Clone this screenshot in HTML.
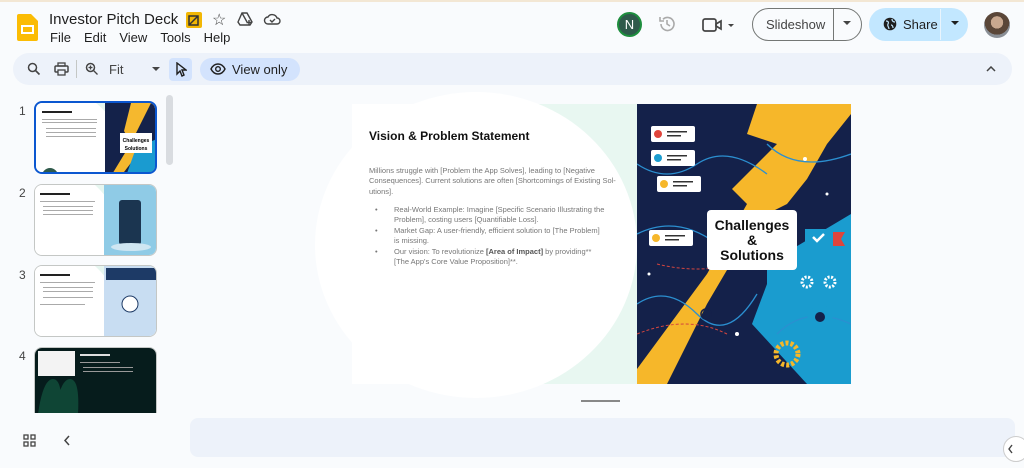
<!DOCTYPE html>
<html><head><meta charset="utf-8"><style>
*{margin:0;padding:0;box-sizing:border-box}
body{width:1024px;height:468px;overflow:hidden;background:#f9fbfd;font-family:"Liberation Sans",sans-serif;color:#1f1f1f;position:relative}
.a{position:absolute}
.menu span{margin-right:13px}
.thumb{position:absolute;left:34px;width:123px;border:1px solid #c4c7c5;border-radius:8px;overflow:hidden;background:#fff}
.num{position:absolute;left:19px;font-size:12px;color:#444}
.tb{font-size:13px;color:#444}
</style></head><body>
<div class="a" style="left:0;top:0;width:1024px;height:2px;background:#f3e7d4"></div>
<svg class="a" style="left:17px;top:14px" width="21" height="27" viewBox="0 0 21 27"><path d="M2 0h12l7 7v18a2 2 0 0 1-2 2H2a2 2 0 0 1-2-2V2a2 2 0 0 1 2-2z" fill="#fbbc04"/><rect x="5" y="12" width="11" height="7" fill="none" stroke="#fff" stroke-width="2"/></svg>
<div class="a" style="left:49px;top:11px;font-size:15px">Investor Pitch Deck</div>
<div class="a" style="left:186px;top:12px;width:16px;height:16px;background:#f2b705;border-radius:2px"><svg width="16" height="16"><path d="M3 4h9v9H3z M4 12l8-8" stroke="#333" fill="none" stroke-width="1.5"/></svg></div>
<div class="a" style="left:212px;top:10px;font-size:16px;color:#444">☆</div>
<svg class="a" style="left:237px;top:11px" width="16" height="16" viewBox="0 0 16 16"><path d="M5 2h5l5 9-2 3H3l-2-3z M5 2l5 9" fill="none" stroke="#444" stroke-width="1.4"/><path d="M12 9v5M9.5 11.5h5" stroke="#444" stroke-width="1.4"/></svg>
<svg class="a" style="left:263px;top:12px" width="18" height="14" viewBox="0 0 18 14"><path d="M5 12h9a3 3 0 0 0 0-6 5 5 0 0 0-9-1 3.5 3.5 0 0 0 0 7z M7 8l2 2 3-3" fill="none" stroke="#444" stroke-width="1.4"/></svg>
<div class="a menu" style="left:50px;top:30px;font-size:13px"><span>File</span><span>Edit</span><span>View</span><span>Tools</span><span>Help</span></div>

<div class="a" style="left:617px;top:12px;width:25px;height:25px;border-radius:50%;background:#2f5a4b;border:2px solid #1e8e3e;color:#fff;font-size:13px;text-align:center;line-height:21px">N</div>
<svg class="a" style="left:657px;top:14px" width="20" height="20" viewBox="0 0 20 20"><path d="M4 10a6.5 6.5 0 1 0 2-4.7M3 3v4h4M10 6v4l3 2" fill="none" stroke="#aaa" stroke-width="1.6"/></svg>
<svg class="a" style="left:702px;top:17px" width="36" height="16" viewBox="0 0 36 16"><rect x="1" y="2" width="13" height="12" rx="2" fill="none" stroke="#444" stroke-width="1.7"/><path d="M14 7l5-3v8l-5-3z" fill="none" stroke="#444" stroke-width="1.7"/><path d="M26 7h6l-3 3z" fill="#444"/></svg>
<div class="a" style="left:752px;top:8px;width:110px;height:33px;border:1px solid #747775;border-radius:17px"></div>
<div class="a" style="left:833px;top:9px;width:1px;height:31px;background:#747775"></div>
<div class="a" style="left:766px;top:17px;font-size:13px;color:#444">Slideshow</div>
<svg class="a" style="left:842px;top:20px" width="10" height="6"><path d="M1 1h8l-4 4z" fill="#444"/></svg>
<div class="a" style="left:869px;top:8px;width:99px;height:33px;border-radius:17px;background:#c2e7ff"></div>
<div class="a" style="left:940px;top:9px;width:1px;height:31px;background:#e8f4fd"></div>
<svg class="a" style="left:883px;top:17px" width="14" height="14" viewBox="0 0 14 14"><circle cx="7" cy="7" r="6.3" fill="#1f1f1f"/><path d="M3 4c2 0 3 1 2 3s1 3 1 5M9 2c0 2 1 3 3 3M8 8c1 0 2 1 2 3" stroke="#c2e7ff" stroke-width="1.2" fill="none"/></svg>
<div class="a" style="left:903px;top:17px;font-size:13px;color:#1f1f1f">Share</div>
<svg class="a" style="left:950px;top:20px" width="10" height="6"><path d="M1 1h8l-4 4z" fill="#1f1f1f"/></svg>
<div class="a" style="left:984px;top:12px;width:26px;height:26px;border-radius:50%;background:radial-gradient(circle at 50% 40%,#c9a88f 0 30%,#5a4638 31% 60%,#8a8f96 61%)"></div>

<div class="a" style="left:13px;top:53px;width:999px;height:32px;border-radius:16px;background:#edf2fa"></div>
<svg class="a" style="left:27px;top:62px" width="14" height="14" viewBox="0 0 14 14"><circle cx="5.5" cy="5.5" r="4" fill="none" stroke="#444" stroke-width="1.5"/><path d="M8.5 8.5l4 4" stroke="#444" stroke-width="1.6"/></svg>
<svg class="a" style="left:54px;top:62px" width="15" height="14" viewBox="0 0 15 14"><rect x="1" y="4" width="13" height="6" rx="1" fill="none" stroke="#444" stroke-width="1.5"/><rect x="4" y="1" width="7" height="3" fill="none" stroke="#444" stroke-width="1.3"/><rect x="4" y="8" width="7" height="5" fill="#edf2fa" stroke="#444" stroke-width="1.3"/></svg>
<div class="a" style="left:76px;top:60px;width:1px;height:18px;background:#c4c7c5"></div>
<svg class="a" style="left:85px;top:62px" width="14" height="14" viewBox="0 0 14 14"><circle cx="5.5" cy="5.5" r="4" fill="none" stroke="#444" stroke-width="1.5"/><path d="M8.5 8.5l4 4M3.5 5.5h4M5.5 3.5v4" stroke="#444" stroke-width="1.3"/></svg>
<div class="a tb" style="left:109px;top:62px">Fit</div>
<svg class="a" style="left:152px;top:67px" width="8" height="5"><path d="M0 0h8l-4 4z" fill="#444"/></svg>
<div class="a" style="left:169px;top:58px;width:23px;height:23px;border-radius:4px;background:#d3e3fd"></div>
<svg class="a" style="left:175px;top:62px" width="12" height="15" viewBox="0 0 12 15"><path d="M2 1v11l3-3 2 5 2-1-2-5h4z" fill="none" stroke="#1f1f1f" stroke-width="1.4"/></svg>
<div class="a" style="left:200px;top:58px;width:100px;height:23px;border-radius:12px;background:#d3e3fd"></div>
<svg class="a" style="left:210px;top:63px" width="16" height="12" viewBox="0 0 16 12"><path d="M1 6c2-4 5-5 7-5s5 1 7 5c-2 4-5 5-7 5s-5-1-7-5z" fill="none" stroke="#1f1f1f" stroke-width="1.4"/><circle cx="8" cy="6" r="2.3" fill="none" stroke="#1f1f1f" stroke-width="1.4"/></svg>
<div class="a" style="left:232px;top:62px;font-size:13px;color:#1f1f1f">View only</div>
<svg class="a" style="left:986px;top:66px" width="10" height="6"><path d="M1 5l4-4 4 4" fill="none" stroke="#444" stroke-width="1.5"/></svg>

<div class="num" style="top:104px">1</div>
<div class="thumb" style="top:101px;height:73px;border:2px solid #0b57d0">
<svg width="123" height="73"><rect width="123" height="73" fill="#fff"/><path d="M60 0h10v73H75q25-40 -15-73z" fill="#e6f6f0"/><rect x="69" y="0" width="54" height="73" fill="#14224a"/><path d="M95 0h20L100 30l10 10-25 33H75L95 40 88 28z" fill="#f5b82e"/><path d="M100 45l23-10v38H90z" fill="#1a9bd0"/><rect x="84" y="30" width="32" height="20" fill="#fff"/><text x="100" y="39" font-size="5" text-anchor="middle" font-weight="bold">Challenges</text><text x="100" y="47" font-size="5" text-anchor="middle" font-weight="bold">Solutions</text><rect x="6" y="8" width="30" height="2" fill="#222"/><rect x="6" y="16" width="55" height="1" fill="#aaa"/><rect x="6" y="19" width="55" height="1" fill="#aaa"/><rect x="10" y="25" width="50" height="1" fill="#aaa"/><rect x="10" y="29" width="50" height="1" fill="#aaa"/><rect x="10" y="33" width="50" height="1" fill="#aaa"/><circle cx="14" cy="73" r="8" fill="#2f5a4b"/></svg></div>
<div class="num" style="top:186px">2</div>
<div class="thumb" style="top:184px;height:72px">
<svg width="123" height="72"><rect width="123" height="72" fill="#fff"/><path d="M60 0h10v72H75q20-40 -15-72z" fill="#e6f6f0"/><rect x="69" y="0" width="54" height="72" fill="#8fcbe6"/><rect x="84" y="15" width="22" height="45" rx="3" fill="#1b3550"/><ellipse cx="96" cy="62" rx="20" ry="4" fill="#cfe6f2"/><rect x="5" y="8" width="30" height="2" fill="#222"/><rect x="5" y="16" width="55" height="1" fill="#aaa"/><rect x="8" y="21" width="50" height="1" fill="#aaa"/><rect x="8" y="25" width="50" height="1" fill="#aaa"/><rect x="8" y="29" width="50" height="1" fill="#aaa"/></svg></div>
<div class="num" style="top:268px">3</div>
<div class="thumb" style="top:265px;height:72px">
<svg width="123" height="72"><rect width="123" height="72" fill="#fff"/><path d="M60 0h10v72H75q20-40 -15-72z" fill="#e6f6f0"/><rect x="69" y="0" width="54" height="72" fill="#c8ddf2"/><rect x="71" y="2" width="50" height="12" fill="#1d3a66"/><circle cx="95" cy="38" r="8" fill="#fff" stroke="#1d3a66"/><rect x="5" y="8" width="30" height="2" fill="#222"/><rect x="5" y="16" width="55" height="1" fill="#aaa"/><rect x="8" y="21" width="50" height="1" fill="#aaa"/><rect x="8" y="25" width="50" height="1" fill="#aaa"/><rect x="8" y="31" width="50" height="1" fill="#aaa"/><rect x="5" y="38" width="45" height="1" fill="#aaa"/></svg></div>
<div class="num" style="top:349px">4</div>
<div class="thumb" style="top:347px;height:66px;border-bottom:none;border-radius:8px 8px 0 0">
<svg width="123" height="66"><rect width="123" height="66" fill="#061c1c"/><rect x="3" y="3" width="37" height="25" fill="#f3f3f3"/><path d="M3 66q5-35 15-35t8 35zM20 66q5-35 15-35t8 35z" fill="#0f4535"/><rect x="45" y="6" width="30" height="2" fill="#ddd"/><rect x="45" y="14" width="40" height="1" fill="#999"/><rect x="48" y="19" width="50" height="1" fill="#999"/><rect x="48" y="23" width="50" height="1" fill="#999"/></svg></div>
<div class="a" style="left:166px;top:95px;width:7px;height:70px;border-radius:4px;background:#d9dce0"></div>
<svg class="a" style="left:23px;top:434px" width="13" height="13" viewBox="0 0 13 13"><g fill="none" stroke="#444" stroke-width="1.3"><rect x="1" y="1" width="4" height="4"/><rect x="8" y="1" width="4" height="4"/><rect x="1" y="8" width="4" height="4"/><rect x="8" y="8" width="4" height="4"/></g></svg>
<svg class="a" style="left:63px;top:435px" width="7" height="11"><path d="M6 1L2 5.5 6 10" fill="none" stroke="#444" stroke-width="1.5"/></svg>

<div class="a" style="left:352px;top:104px;width:499px;height:280px;background:#e8f7f1"></div>
<div class="a" style="left:315px;top:92px;width:322px;height:306px;border-radius:50%;background:#fff"></div>
<div class="a" style="left:352px;top:104px;width:80px;height:280px;background:#fff"></div>
<div class="a" style="left:369px;top:129px;font-size:12px;font-weight:bold;color:#111">Vision &amp; Problem Statement</div>
<div class="a" style="left:369px;top:166px;width:250px;font-size:7.5px;line-height:10.4px;color:#777">Millions struggle with [Problem the App Solves], leading to [Negative Consequences]. Current solutions are often [Shortcomings of Existing Sol-utions].</div>
<div class="a" style="left:375px;top:205px;width:230px;font-size:7.5px;line-height:10.4px;color:#777">
<div style="position:relative;padding-left:19px"><span style="position:absolute;left:0">•</span>Real-World Example: Imagine [Specific Scenario Illustrating the Problem], costing users [Quantifiable Loss].</div>
<div style="position:relative;padding-left:19px"><span style="position:absolute;left:0">•</span>Market Gap: A user-friendly, efficient solution to [The Problem] is missing.</div>
<div style="position:relative;padding-left:19px"><span style="position:absolute;left:0">•</span>Our vision: To revolutionize <b style="color:#555">[Area of Impact]</b> by providing**[The App's Core Value Proposition]**.</div></div>
<svg class="a" style="left:637px;top:104px" width="214" height="280" viewBox="0 0 214 280">
<rect width="214" height="280" fill="#14214a"/>
<path d="M120 0h94v10L190 40 170 75 150 100 120 115 70 200 30 280H0V265L70 170 110 100 95 85 140 40 110 30z" fill="#f6b72a"/>
<path d="M130 160l84-50v170H170L115 220 130 180z" fill="#1a9ccf"/>
<path d="M0 60q30 20 60 0t70 10M0 130q40-20 80 10t60-20M0 200q30-20 60 10t60-20M130 40q30 30 84 10M140 230q30-30 74-10" fill="none" stroke="#2b8fd0" stroke-width="1.3"/>
<path d="M20 160q40 10 80 0M0 230q50-20 90 0" fill="none" stroke="#d3453f" stroke-width="1" stroke-dasharray="3 2"/>
<g fill="#fff"><rect x="14" y="22" width="44" height="16" rx="2"/><rect x="14" y="46" width="44" height="16" rx="2"/><rect x="20" y="72" width="44" height="16" rx="2"/><rect x="12" y="126" width="44" height="16" rx="2"/></g>
<circle cx="21" cy="30" r="4" fill="#e0453c"/><circle cx="21" cy="54" r="4" fill="#1a9ccf"/><circle cx="27" cy="80" r="4" fill="#f6b72a"/><circle cx="19" cy="134" r="4" fill="#f6b72a"/>
<g fill="#333"><rect x="30" y="27" width="20" height="1.5"/><rect x="30" y="31" width="14" height="1.5"/><rect x="30" y="51" width="20" height="1.5"/><rect x="30" y="55" width="14" height="1.5"/><rect x="36" y="77" width="20" height="1.5"/><rect x="36" y="81" width="14" height="1.5"/><rect x="28" y="131" width="20" height="1.5"/><rect x="28" y="135" width="14" height="1.5"/></g>
<rect x="168" y="125" width="28" height="18" fill="#1a9ccf"/><path d="M196 128h12l-4 7 4 7h-12z" fill="#e0453c"/><path d="M176 133l4 4 7-7" stroke="#fff" stroke-width="2.5" fill="none"/>
<rect x="70" y="106" width="90" height="60" rx="4" fill="#fff"/>
<text x="115" y="126" font-family="Liberation Sans" font-weight="bold" font-size="14" text-anchor="middle" fill="#111">Challenges</text>
<text x="115" y="141" font-family="Liberation Sans" font-weight="bold" font-size="14" text-anchor="middle" fill="#111">&amp;</text>
<text x="115" y="156" font-family="Liberation Sans" font-weight="bold" font-size="14" text-anchor="middle" fill="#111">Solutions</text>
<circle cx="183" cy="213" r="12" fill="#1a9ccf" stroke="#1a9ccf"/><circle cx="183" cy="213" r="5" fill="#14214a"/>
<circle cx="150" cy="250" r="11" fill="none" stroke="#f6b72a" stroke-width="5" stroke-dasharray="3 2"/>
<circle cx="170" cy="178" r="5" fill="none" stroke="#fff" stroke-width="3" stroke-dasharray="2 1.5"/><circle cx="193" cy="178" r="5" fill="none" stroke="#fff" stroke-width="3" stroke-dasharray="2 1.5"/>
<circle cx="69" cy="210" r="5" fill="none" stroke="#14214a" stroke-width="1.5"/>
<g fill="#fff"><circle cx="168" cy="55" r="2"/><circle cx="12" cy="170" r="1.5"/><circle cx="190" cy="90" r="1.5"/><circle cx="100" cy="230" r="2"/></g>
</svg>
<div class="a" style="left:581px;top:400px;width:39px;height:2px;background:#888"></div>

<div class="a" style="left:190px;top:418px;width:825px;height:39px;border-radius:8px;background:#edf2fa"></div>
<div class="a" style="left:1003px;top:436px;width:26px;height:26px;border-radius:50%;background:#fff;border:1px solid #ccc"></div>
<svg class="a" style="left:1007px;top:444px" width="7" height="10"><path d="M5 1L2 5 5 9" fill="none" stroke="#444" stroke-width="1.4"/></svg>
</body></html>
